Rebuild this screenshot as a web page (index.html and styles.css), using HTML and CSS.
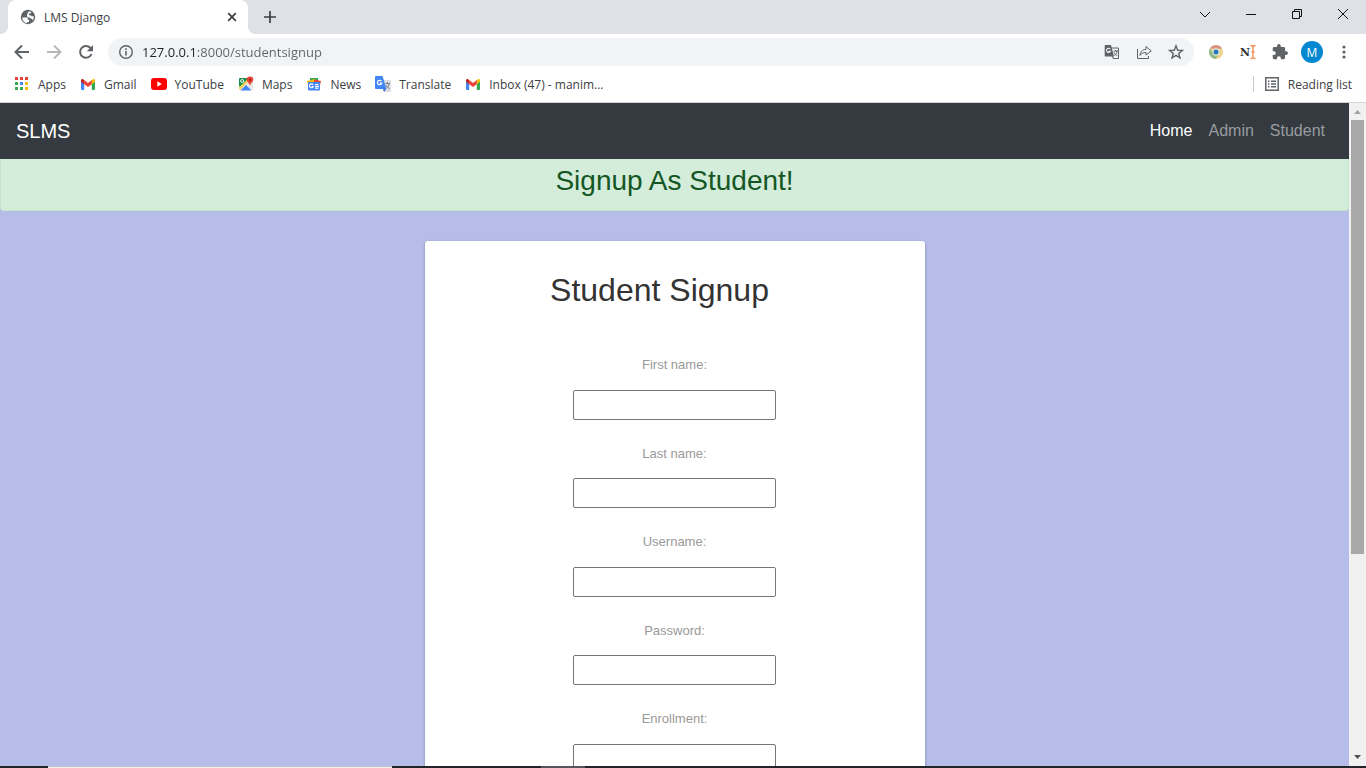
FILE: index.html
```html
<!DOCTYPE html>
<html lang="en">
<head>
<meta charset="utf-8">
<title>LMS Django</title>
<link rel="stylesheet" href="styles.css">
</head>
<body>
<svg width="0" height="0" class="defs" aria-hidden="true">
  <symbol id="gmail" viewBox="0 0 16 16">
    <path fill="#4285f4" d="M1 4.500l3.200 2.400V14H2a1 1 0 0 1-1-1z"/>
    <path fill="#34a853" d="M15 4.500l-3.200 2.400V14H14a1 1 0 0 0 1-1z"/>
    <path fill="#fbbc04" d="M11.800 4.100l.9-.7c1-.8 2.300-.1 2.300 1.100v1.300l-3.200 2.400z"/>
    <path fill="#ea4335" d="M4.200 8.200V4.100L8 7l3.800-2.900v4.100L8 11z"/>
    <path fill="#c5221f" d="M1 4.500c0-1.200 1.300-1.900 2.300-1.100l.9.7v4.100L1 5.800z"/>
  </symbol>
</svg>

<header class="browser">
  <div class="titlebar">
    <div class="tab">
      <svg class="icon" viewBox="0 0 16 16"><circle cx="8" cy="8" r="7.200" fill="#5f6368"/><path fill="#fff" d="M2.300 8.500h4.200c.9 0 1.300.6 1.300 1.300v.9h1.300v1.500c0 .6-.5 1-1.100 1H7v.9a5.800 5.800 0 0 1-4.700-5.600z"/><path fill="#fff" d="M9 2.300l2.300.7-.9 1.500H8.900v1.700h1.700l1 1h2.200a6 6 0 0 1-1.400 4.600V9.800h-1.500L9.800 8.600 7.700 8.400 6.900 6.800 7.700 4z"/></svg>
      <span class="tab-title">LMS Django</span>
      <button class="icon-button" aria-label="Close tab"><svg class="icon" viewBox="0 0 16 16"><path class="stroke-dark" d="M4.200 4.200l7.600 7.600M11.800 4.200l-7.600 7.600"/></svg></button>
    </div>
    <button class="icon-button new-tab" aria-label="New tab"><svg class="icon" viewBox="0 0 16 16"><path class="stroke-dark" d="M8 2v12M2 8h12"/></svg></button>
    <div class="window-controls">
      <button aria-label="Search tabs"><svg class="icon" viewBox="0 0 16 16"><path class="stroke-thin" d="M3 6l5 5 5-5"/></svg></button>
      <button aria-label="Minimize"><svg class="icon" viewBox="0 0 16 16"><path class="stroke-thin" d="M3 8.500h10"/></svg></button>
      <button aria-label="Restore"><svg class="icon" viewBox="0 0 16 16"><path class="stroke-thin" d="M3.500 5.500h7v7h-7zM5.500 5.500v-2h7v7h-2"/></svg></button>
      <button aria-label="Close"><svg class="icon" viewBox="0 0 16 16"><path class="stroke-thin" d="M3 3l10 10M13 3L3 13"/></svg></button>
    </div>
  </div>

  <div class="toolbar">
    <div class="nav-buttons">
      <button class="icon-button" aria-label="Back"><svg class="icon" viewBox="0 0 16 16"><path class="stroke-mid" d="M15 8H2M8 1.500L1.500 8 8 14.500"/></svg></button>
      <button class="icon-button faded" aria-label="Forward"><svg class="icon" viewBox="0 0 16 16"><path class="stroke-mid" d="M1 8h13M8 1.500L14.500 8 8 14.500"/></svg></button>
      <button class="icon-button" aria-label="Reload"><svg class="icon" viewBox="0 0 16 16"><path class="stroke-mid" d="M13.500 10A5.900 5.900 0 1 1 12.500 4"/><path fill="#5f6368" d="M15 1v6.200H8.800z"/></svg></button>
    </div>
    <div class="omnibox">
      <button class="icon-button" aria-label="Site information"><svg class="icon" viewBox="0 0 16 16"><circle class="stroke-line" cx="8" cy="8" r="6.300"/><path fill="#5f6368" d="M7.200 7h1.600v4.500H7.200zM7.200 4.300h1.600v1.600H7.200z"/></svg></button>
      <input class="url" type="text" aria-label="Address" value="127.0.0.1:8000/studentsignup">
      <div class="icon-row">
        <button class="icon-button" aria-label="Translate page"><svg class="icon" viewBox="0 0 16 16"><path fill="#f1f3f4" stroke="#5f6368" d="M7 4h7.500v10.500H9z"/><path fill="#5f6368" d="M1.500 1H7l3 11.500H1.500a.8.800 0 0 1-.8-.8V1.800a.8.800 0 0 1 .8-.8z"/><path fill="none" stroke="#f1f3f4" stroke-width="1.100" d="M6.300 5a2.100 2.100 0 1 0 .2 2.300H4.500"/><path fill="none" stroke="#5f6368" d="M9.500 7H14M11.700 6v1M13 7c0 2-1 3.500-2.700 4.500M10 8.300c.7 1.700 1.700 2.700 3.300 3.300"/></svg></button>
        <button class="icon-button" aria-label="Share"><svg class="icon" viewBox="0 0 16 16"><path class="stroke-share" d="M1.500 5v9.500h11V12M4 11.500c.3-4.200 2.500-6 6-6V2.500L15.300 7 10 11V8.500c-2.800 0-4.500.6-6 3z"/></svg></button>
        <button class="icon-button" aria-label="Bookmark this tab"><svg class="icon" viewBox="0 0 16 16"><path class="stroke-line" d="M8 1.800l1.700 4.400 4.700.2-3.700 3 1.300 4.600L8 11.400 4 14l1.300-4.600-3.700-3 4.700-.2z"/></svg></button>
      </div>
    </div>
    <div class="icon-row">
      <button class="icon-button" aria-label="Chrome extension"><svg class="icon" viewBox="0 0 16 16"><circle cx="8" cy="8" r="7" fill="#ecd28a"/><path fill="#dc9488" d="M1.900 4.600A7 7 0 0 1 14.100 4.600L8 5z"/><path fill="#8fbb8b" d="M1.900 4.600A7 7 0 0 0 7.500 15l2.500-4-4-.5z"/><circle cx="8" cy="8" r="3.700" fill="#e8e6dc"/><circle cx="8" cy="8" r="2.500" fill="#257ab8"/></svg></button>
      <button class="icon-button letter-icon" aria-label="Text extension"><span>N</span><svg class="caret" viewBox="0 0 6 16"><path fill="none" stroke="#f08a4b" stroke-width="1.300" d="M.5 1.500c1.500 0 2.500.5 2.500 1.500v10c0 1-1 1.500-2.500 1.500M5.500 1.500C4 1.500 3 2 3 3M5.500 14.500C4 14.500 3 14 3 13M1.500 8h3"/></svg></button>
      <button class="icon-button" aria-label="Extensions"><svg class="icon" viewBox="1 1 22 22"><path fill="#5f6368" d="M20.500 11H19V7a2 2 0 0 0-2-2h-4V3.500a2.500 2.500 0 0 0-5 0V5H4a2 2 0 0 0-2 2v3.800h1.500a2.700 2.700 0 0 1 0 5.400H2V20c0 1.100.9 2 2 2h3.800v-1.500a2.700 2.700 0 0 1 5.400 0V22H17a2 2 0 0 0 2-2v-4h1.500a2.500 2.500 0 0 0 0-5z"/></svg></button>
      <button class="avatar" aria-label="Profile M">M</button>
      <button class="icon-button" aria-label="Menu"><svg class="icon" viewBox="0 0 16 16"><g fill="#5f6368"><circle cx="8" cy="3" r="1.600"/><circle cx="8" cy="8" r="1.600"/><circle cx="8" cy="13" r="1.600"/></g></svg></button>
    </div>
  </div>

  <nav class="bookmarks" aria-label="Bookmarks">
    <a href="#"><svg class="icon" viewBox="0 0 16 16"><path fill="#ea4335" d="M1 1h3v3H1zM6 1h3v3H6zM11 1h3v3h-3z"/><path fill="#34a853" d="M1 6h3v3H1zM1 11h3v3H1zM6 11h3v3H6z"/><path fill="#4285f4" d="M6 6h3v3H6z"/><path fill="#fbbc04" d="M11 6h3v3h-3zM11 11h3v3h-3z"/></svg>Apps</a>
    <a href="#"><svg class="icon"><use href="#gmail"/></svg>Gmail</a>
    <a href="#"><svg class="icon" viewBox="0 0 16 16"><rect y="2" width="16" height="12" rx="3" fill="#f00"/><path fill="#fff" d="M6.300 5.300L10.800 8l-4.500 2.700z"/></svg>YouTube</a>
    <a href="#"><svg class="icon" viewBox="0 0 16 16"><path fill="#34a853" d="M2 2h9L2 12z"/><path fill="#1e8e4a" d="M1 3a1 1 0 0 1 1-1h8L1 11z"/><path fill="#e8eaed" d="M1 13L12 2l3 2v10H2z"/><path fill="#fbd35a" d="M1 11.500L10 3v3L2 14l-1-1z"/><path fill="#4285f4" d="M2.500 14.500L8 9l5.500 5.500z"/><circle cx="4.200" cy="5" r="1.500" fill="none" stroke="#fff"/><path fill="#ea4335" d="M12 .5a3.300 3.300 0 0 1 3.300 3.300C15.300 6 12.500 7 12 10c-.5-3-3.300-4-3.300-6.200A3.300 3.300 0 0 1 12 .5z"/><circle cx="12" cy="3.800" r="1.100" fill="#8c1d18"/></svg>Maps</a>
    <a href="#"><svg class="icon" viewBox="0 0 16 16"><path fill="#34a853" d="M4 2h8v4H4z"/><path fill="#fbbc04" d="M1 5l8-2 1 4-8 2z"/><path fill="#ea4335" d="M8 3.500l7 1.500-1 4H8z"/><rect x="2" y="6" width="12" height="8.500" rx="1" fill="#4285f4"/><path fill="none" stroke="#fff" stroke-width="1.200" d="M7 8.800a1.900 1.900 0 1 0 .2 1.700H5.600M9 8.500h3.500M9 10.300h4M9 12.100h3.500"/></svg>News</a>
    <a href="#"><svg class="icon" viewBox="0 0 16 16"><path fill="#dadce0" d="M6 4h9a1 1 0 0 1 1 1v10a1 1 0 0 1-1 1H9z"/><path fill="#3367d6" d="M8 13h3l-2 3z"/><path fill="#4285f4" d="M1 0h6.500L11.500 13H1a1 1 0 0 1-1-1V1a1 1 0 0 1 1-1z"/><path fill="none" stroke="#fff" stroke-width="1.200" d="M6.400 5.200a2.200 2.200 0 1 0 .3 2H4.700"/><path fill="none" stroke="#7b848c" d="M10.500 7.500H15M12.500 6v1.500M14 7.500c0 2-1 3.500-2.500 4.500M11 9c.5 1.500 1.500 2.500 3.500 3.500"/></svg>Translate</a>
    <a href="#"><svg class="icon"><use href="#gmail"/></svg>Inbox (47) - manim...</a>
    <button class="reading-list"><svg class="icon" viewBox="0 0 16 16"><path fill="none" stroke="#5f6368" stroke-width="1.500" d="M1.800 1.800h12.400v12.400H1.800zM4 5.200h1.500M7 5.200h5M4 8h1.500M7 8h5M4 10.800h1.500M7 10.800h5"/></svg>Reading list</button>
  </nav>
</header>

<div class="viewport">
  <div class="page">
    <nav class="navbar" aria-label="Main">
      <a class="brand" href="#">SLMS</a>
      <a class="active" href="#">Home</a>
      <a href="#">Admin</a>
      <a href="#">Student</a>
    </nav>
    <div class="alert"><h3>Signup As Student!</h3></div>
    <form class="card">
      <h2>Student Signup</h2>
      <div class="field"><label for="first">First name:</label><input id="first" type="text"></div>
      <div class="field"><label for="last">Last name:</label><input id="last" type="text"></div>
      <div class="field"><label for="user">Username:</label><input id="user" type="text"></div>
      <div class="field"><label for="pass">Password:</label><input id="pass" type="password"></div>
      <div class="field"><label for="enroll">Enrollment:</label><input id="enroll" type="text"></div>
    </form>
  </div>
  <div class="scrollbar" aria-hidden="true">
    <svg class="arrow" viewBox="0 0 17 17"><path fill="#a3a3a3" d="M5 11l3.500-4 3.500 4z"/></svg>
    <div class="track"><div class="thumb"></div></div>
    <svg class="arrow" viewBox="0 0 17 17"><path fill="#505050" d="M5 6l3.500 4L12 6z"/></svg>
  </div>
</div>
<footer class="taskbar"><div class="search-edge"></div><div class="app-edge"></div></footer>
</body>
</html>
```
FILE: styles.css
```css
* { box-sizing: border-box; }

body {
  margin: 0;
  height: 100vh;
  display: flex;
  flex-direction: column;
  overflow: hidden;
  font-family: "Liberation Sans", Arial, sans-serif;
}

a { text-decoration: none; color: inherit; }

button {
  display: flex;
  align-items: center;
  justify-content: center;
  padding: 0;
  border: 0;
  background: none;
  font: inherit;
  color: inherit;
}

.defs { position: absolute; }
.icon { width: 16px; height: 16px; flex: none; display: block; }
.icon-button { width: 16px; height: 16px; flex: none; }
.faded { opacity: 0.45; }
.stroke-dark { fill: none; stroke: #3c4043; stroke-width: 1.7; }
.stroke-mid { fill: none; stroke: #5f6368; stroke-width: 2; }
.stroke-line { fill: none; stroke: #5f6368; stroke-width: 1.4; }
.stroke-share { fill: none; stroke: #5f6368; stroke-width: 1; }
.stroke-thin { fill: none; stroke: #111; stroke-width: 1; }

/* Browser frame */
.browser {
  flex: none;
  background: #fff;
  border-bottom: 1px solid #d5d6d9;
  font-family: "Open Sans", "Noto Sans", sans-serif;
  font-size: 12px;
  color: #3c4043;
}

.titlebar {
  height: 34px;
  display: flex;
  align-items: center;
  padding-left: 8px;
  background: #dee1e6;
}

.tab {
  position: relative;
  width: 240px;
  height: 34px;
  display: flex;
  align-items: center;
  gap: 8px;
  padding: 0 8px 0 12px;
  background: #fff;
  border-radius: 8px 8px 0 0;
}

.tab::before,
.tab::after {
  content: "";
  position: absolute;
  bottom: 0;
  width: 8px;
  height: 8px;
}

.tab::before { right: 100%; background: radial-gradient(circle at 0 0, #dee1e6 8px, #fff 8px); }
.tab::after { left: 100%; background: radial-gradient(circle at 100% 0, #dee1e6 8px, #fff 8px); }
.tab-title { flex: 1; }
.new-tab { margin-left: 14px; }

.window-controls {
  align-self: flex-start;
  margin-left: auto;
  height: 28px;
  display: flex;
}

.window-controls button { width: 46px; }

.toolbar {
  height: 36px;
  display: flex;
  align-items: center;
  padding: 0 14px;
}

.nav-buttons { display: flex; gap: 16px; margin-right: 14px; }

.omnibox {
  flex: 1;
  height: 28px;
  display: flex;
  align-items: center;
  gap: 8px;
  padding: 0 10px;
  margin-right: 14px;
  border-radius: 14px;
  background: #f1f3f4;
}

.url {
  flex: 1;
  padding: 0;
  border: 0;
  outline: 0;
  font-family: inherit;
  font-size: 13px;
  line-height: 20px;
  color: transparent;
  background: linear-gradient(90deg, #202124 54px, #5f6368 54px);
  -webkit-background-clip: text;
  background-clip: text;
}

.icon-row { display: flex; align-items: center; gap: 16px; }

.letter-icon {
  font-family: "Liberation Mono", monospace;
  font-size: 14px;
  font-weight: 700;
  font-family: "DejaVu Serif", serif;
  font-size: 11px;
  color: #333;
}

.caret { width: 6px; height: 16px; flex: none; }

.avatar {
  width: 22px;
  height: 22px;
  margin: 0 -3px;
  border-radius: 50%;
  background: #0288d1;
  color: #fff;
}

.bookmarks {
  height: 32px;
  display: flex;
  align-items: center;
  gap: 14px;
  padding: 0 14px 4px;
}

.bookmarks a,
.reading-list { display: flex; align-items: center; gap: 8px; white-space: nowrap; }

.reading-list {
  height: 16px;
  margin-left: auto;
  padding-left: 10px;
  border-left: 1px solid #c8cacd;
}

/* Web page */
.viewport { flex: 1; min-height: 0; display: flex; }
.page { flex: 1; overflow: hidden; background: #b6bde8; }

.navbar {
  height: 56px;
  display: flex;
  align-items: center;
  gap: 16px;
  padding: 0 24px 0 16px;
  background: #343a40;
  font-size: 16px;
  color: #999c9f;
}

.brand { margin-right: auto; font-size: 20px; color: #fff; }
.active { color: #fff; }

.alert {
  height: 52px;
  padding-top: 5px;
  border: 1px solid #c3e6cb;
  border-top: 0;
  border-radius: 0 0 4px 4px;
  background: #d4edda;
  color: #155724;
  text-align: center;
}

.alert h3 { margin: 0; font-size: 28px; font-weight: 400; line-height: 34px; }

.card {
  width: 500px;
  max-width: 100%;
  margin: 30px auto;
  padding: 30px 0;
  border-radius: 3px;
  background: #fff;
  box-shadow: 0 1px 3px rgba(0, 0, 0, 0.3);
}

.card h2 {
  margin: 0 30px 46px 0;
  font-size: 32px;
  font-weight: 400;
  line-height: 38px;
  text-align: center;
  color: #333;
}

.field {
  display: flex;
  flex-direction: column;
  align-items: center;
  gap: 15px;
  margin-bottom: 24px;
  font-size: 13px;
  line-height: 1.5;
  color: #999;
}

.field input {
  width: 203px;
  height: 30px;
  padding: 0 4px;
  border: 1px solid #767676;
  border-radius: 2px;
  background: #fff;
  font-size: 16px;
}

.scrollbar {
  width: 17px;
  display: flex;
  flex-direction: column;
  background: #f1f1f1;
}

.arrow { width: 17px; height: 17px; flex: none; }
.track { flex: 1; padding: 0 2px; }
.thumb { height: 69%; background: #a8a8a8; }

.taskbar { flex: none; display: flex; height: 2px; padding-left: 48px; background: #222529; }
.search-edge { width: 344px; background: #f2f2f2; border-top: 1px solid #c4c4c4; }
.app-edge { width: 44px; margin-left: 149px; background: #53565a; }
```
